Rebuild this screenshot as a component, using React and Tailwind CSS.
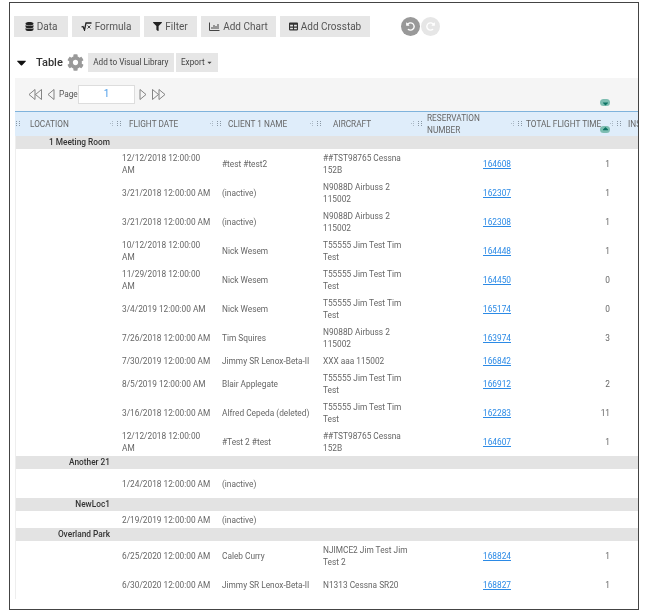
import React from "react";
import { FaDatabase, FaFilter, FaCaretDown, FaCaretUp, FaCog, FaTable, FaUndoAlt, FaRedoAlt } from "react-icons/fa";

const groups = [
	{
		name: "1 Meeting Room", rows: [
			{ h: "h-[29px]", date: "12/12/2018 12:00:00 AM", client: "#test #test2", aircraft: "##TST98765 Cessna 152B", res: "164608", time: "1" },
			{ h: "h-[29px]", date: "3/21/2018 12:00:00 AM", client: "(inactive)", aircraft: "N9088D Airbuss 2 115002", res: "162307", time: "1" },
			{ h: "h-[29px]", date: "3/21/2018 12:00:00 AM", client: "(inactive)", aircraft: "N9088D Airbuss 2 115002", res: "162308", time: "1" },
			{ h: "h-[29px]", date: "10/12/2018 12:00:00 AM", client: "Nick Wesem", aircraft: "T55555 Jim Test Tim Test", res: "164448", time: "1" },
			{ h: "h-[29px]", date: "11/29/2018 12:00:00 AM", client: "Nick Wesem", aircraft: "T55555 Jim Test Tim Test", res: "164450", time: "0" },
			{ h: "h-[29px]", date: "3/4/2019 12:00:00 AM", client: "Nick Wesem", aircraft: "T55555 Jim Test Tim Test", res: "165174", time: "0" },
			{ h: "h-[29px]", date: "7/26/2018 12:00:00 AM", client: "Tim Squires", aircraft: "N9088D Airbuss 2 115002", res: "163974", time: "3" },
			{ h: "h-[17px]", date: "7/30/2019 12:00:00 AM", client: "Jimmy SR Lenox-Beta-II", aircraft: "XXX aaa 115002", res: "166842", time: "" },
			{ h: "h-[29px]", date: "8/5/2019 12:00:00 AM", client: "Blair Applegate", aircraft: "T55555 Jim Test Tim Test", res: "166912", time: "2" },
			{ h: "h-[29px]", date: "3/16/2018 12:00:00 AM", client: "Alfred Cepeda (deleted)", aircraft: "T55555 Jim Test Tim Test", res: "162283", time: "11" },
			{ h: "h-[29px]", date: "12/12/2018 12:00:00 AM", client: "#Test 2 #test", aircraft: "##TST98765 Cessna 152B", res: "164607", time: "1" },
		],
	},
	{
		name: "Another 21", rows: [
			{ h: "h-[29px]", date: "1/24/2018 12:00:00 AM", client: "(inactive)", aircraft: "", res: "", time: "" },
		],
	},
	{
		name: "NewLoc1", rows: [
			{ h: "h-[17px]", date: "2/19/2019 12:00:00 AM", client: "(inactive)", aircraft: "", res: "", time: "" },
		],
	},
	{
		name: "Overland Park", rows: [
			{ h: "h-[29px]", date: "6/25/2020 12:00:00 AM", client: "Caleb Curry", aircraft: "NJIMCE2 Jim Test Jim Test 2", res: "168824", time: "1" },
			{ h: "h-[29px]", date: "6/30/2020 12:00:00 AM", client: "Jimmy SR Lenox-Beta-II", aircraft: "N1313 Cessna SR20", res: "168827", time: "1" },
		],
	},
];

const headers = [
	{ w: "w-[94px]", pl: "pl-[9px]", label: "LOCATION", first: true },
	{ w: "w-[100px]", pl: "pl-[7px]", label: "FLIGHT DATE" },
	{ w: "w-[100px]", pl: "pl-[6px]", label: "CLIENT 1 NAME" },
	{ w: "w-[101px]", pl: "pl-[11px]", label: "AIRCRAFT" },
	{ w: "w-[100px]", pl: "pl-[4px]", label: "RESERVATION NUMBER" },
	{ w: "w-[99px]", pl: "pl-[3px]", label: "TOTAL FLIGHT TIME" },
	{ w: "w-[40px]", pl: "pl-[6px]", label: "INS" },
];

function Grip({ first }) {
	return (
		<svg width={first ? 5 : 12} height="8" viewBox={first ? "7 0 5 8" : "0 0 12 8"} className="shrink-0" fill="#8a98a5">
			{!first && <>
				<rect x="0" y="3" width="1" height="1" opacity="0.6" />
				<rect x="2" y="1" width="1" height="1" opacity="0.6" />
				<rect x="2" y="3" width="1" height="1" opacity="0.6" />
				<rect x="2" y="5" width="1" height="1" opacity="0.6" />
			</>}
			<rect x="7" y="1" width="1" height="1" /><rect x="7" y="3" width="1" height="1" /><rect x="7" y="5" width="1" height="1" />
			<rect x="10" y="1" width="1" height="1" /><rect x="10" y="3" width="1" height="1" /><rect x="10" y="5" width="1" height="1" />
		</svg>
	);
}

function ToolButton({ w, children }) {
	return <button className={`${w} h-[21px] bg-[#e6e6e6] flex items-center justify-center gap-[3px] text-[10px] text-[#555]`}>{children}</button>;
}

function SqrtIcon() {
	return (
		<svg width="11" height="9" viewBox="0 0 11 9" fill="none" stroke="#222">
			<path d="M0.5 5 L2 4.5 L3.5 8 L5 1 H10.5" strokeWidth="1.3" />
			<path d="M6.5 3.5 L9.5 6.5 M9.5 3.5 L6.5 6.5" strokeWidth="0.8" />
		</svg>
	);
}

function ChartIcon() {
	return (
		<svg width="11" height="9" viewBox="0 0 11 9" fill="none" stroke="#444">
			<path d="M0.5 0.5 V8.5 H10.5" />
			<path d="M3 7 V5 M5 7 V3 M7 7 V4 M9 7 V2" />
		</svg>
	);
}

function PagerArrow({ right, double }) {
	return (
		<svg width={double ? 15 : 8} height="13" viewBox={double ? "0 0 15 12" : "0 0 8 12"} fill="none" stroke="#777" strokeWidth="0.9" className={right ? "-scale-x-100" : ""}>
			<path d="M7 1 L1 6 L7 11 Z" />
			{double && <path d="M13.5 1 L7.5 6 L13.5 11 Z" />}
		</svg>
	);
}

function Row({ row }) {
	return (
		<div className={`${row.h} grid grid-cols-[106px_100px_101px_102px_95px_95px] items-center text-[8.3px] leading-[12px] text-[#666]`}>
			<div />
			<div className="pr-[8px]">{row.date}</div>
			<div className="whitespace-nowrap">{row.client}</div>
			<div className="pr-[8px]">{row.aircraft}</div>
			<div className="text-right pr-[9px]"><span className="text-[#2b8ae6] underline">{row.res}</span></div>
			<div className="text-right pr-[5px]">{row.time}</div>
		</div>
	);
}

export default function App() {
	return (
		<div className="w-[668px] h-[616px] bg-white font-['Roboto',sans-serif] pt-[2px] pl-[9px] blur-[0.3px]">
			<div className="relative w-[630px] h-[608px] border border-[#444] overflow-hidden pl-[5px] pt-[13px]">
				<div className="-ml-[1px] flex items-center gap-[4px] h-[21px]">
					<ToolButton w="w-[54px]"><FaDatabase className="text-[#222] text-[9px]" />Data</ToolButton>
					<ToolButton w="w-[68px]"><SqrtIcon />Formula</ToolButton>
					<ToolButton w="w-[53px]"><FaFilter className="text-[#222] text-[9px]" />Filter</ToolButton>
					<ToolButton w="w-[75px]"><ChartIcon />Add Chart</ToolButton>
					<ToolButton w="w-[90px]"><FaTable className="text-[#333] text-[9px]" />Add Crosstab</ToolButton>
					<div className="ml-[27px] w-[19px] h-[19px] rounded-full bg-[#999] flex items-center justify-center"><FaUndoAlt className="text-white text-[9px]" /></div>
					<div className="-ml-[3px] w-[19px] h-[19px] rounded-full bg-[#e6e6e6] flex items-center justify-center"><FaRedoAlt className="text-white text-[9px]" /></div>
				</div>
				<div className="-ml-[1px] flex items-center h-[19px] mt-[16px]">
					<FaCaretDown className="text-[#111] text-[15px] shrink-0" />
					<span className="ml-[7px] mt-[1px] text-[11px] font-medium text-[#333]">Table</span>
					<FaCog className="ml-[4px] text-[#999] text-[17px] shrink-0" />
					<button className="ml-[4px] w-[86px] h-[19px] bg-[#e6e6e6] text-[8.2px] text-[#444] whitespace-nowrap">Add to Visual Library</button>
					<button className="ml-[2px] w-[42px] h-[19px] bg-[#e6e6e6] text-[8.2px] text-[#444] flex items-center justify-center gap-[1px]">Export<FaCaretDown className="text-[7px]" /></button>
				</div>
				<div className="relative mt-[6px] -mr-[1px] h-[33px] bg-[#f5f5f5] flex items-center pl-[13px]">
					<PagerArrow double />
					<div className="ml-[4px] flex"><PagerArrow /></div>
					<span className="ml-[4px] w-[19px] text-[8.3px] text-[#555]">Page</span>
					<div className="w-[57px] h-[19px] bg-white border border-[#ddd] text-center text-[10px] leading-[16px] text-[#4a9be8]">1</div>
					<div className="ml-[4px] flex"><PagerArrow right /></div>
					<div className="ml-[4px] flex"><PagerArrow right double /></div>
					<div className="absolute left-[585px] bottom-[5px] w-[10px] h-[7px] rounded-full bg-[#7dbdb1] flex justify-center"><FaCaretDown className="text-[#0b7263] text-[9px]" /></div>
				</div>
				<div className="relative h-[25px] bg-[#dfedfa] border-t border-[#7fb3dc] flex items-center text-[8.25px] leading-[12px] text-[#666] whitespace-nowrap pl-[1px]">
					{headers.map((h) => (
						<div key={h.label} className={`${h.w} shrink-0 flex items-center`}>
							<Grip first={h.first} />
							<span className={`${h.pl} ${h.label === "RESERVATION NUMBER" ? "whitespace-normal" : ""}`}>{h.label}</span>
						</div>
					))}
					<div className="absolute left-[585px] bottom-[3px] w-[10px] h-[7px] rounded-full bg-[#7dbdb1] flex justify-center"><FaCaretUp className="text-[#0b7263] text-[9px] -mt-[2px]" /></div>
				</div>
				<div className="border-l border-[#eee]">
					{groups.map((g) => (
						<div key={g.name}>
							<div className="h-[13px] bg-[#e3e3e3] text-[8.3px] leading-[13px] text-[#333] font-medium">
								<div className="w-[94px] text-right whitespace-nowrap">{g.name}</div>
							</div>
							{g.rows.map((r) => <Row key={g.name + r.date + r.res} row={r} />)}
						</div>
					))}
				</div>
			</div>
		</div>
	);
}
